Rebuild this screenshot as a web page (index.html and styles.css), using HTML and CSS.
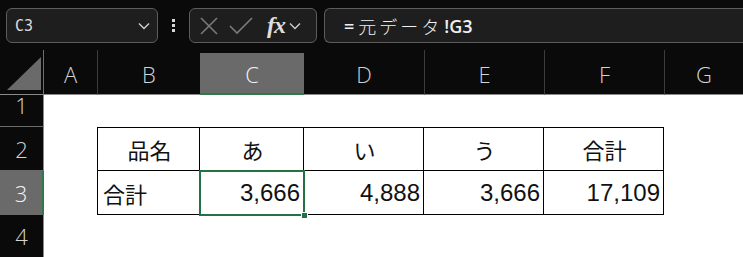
FILE: index.html
```html
<!DOCTYPE html>
<html lang="ja">
<head>
    <meta charset="UTF-8">
    <title>Sheet</title>
    <link rel="stylesheet" href="styles.css">
</head>
<body>
    <!-- Name box / formula bar -->
    <div class="toolbar">
        <div class="name-box">
            <span>C3</span>
            <svg class="chev" width="12" height="8" viewBox="0 0 12 8"><path d="M1 1.5 L6 6.5 L11 1.5" fill="none" stroke="#cfcfcf" stroke-width="1.4"/></svg>
        </div>
        <div class="kebab"><i></i><i></i><i></i></div>
        <div class="fx-box">
            <svg width="20" height="18" viewBox="0 0 20 18"><path d="M2 1 L18 17 M18 1 L2 17" stroke="#7a7a7a" stroke-width="1.6" fill="none"/></svg>
            <svg width="24" height="18" viewBox="0 0 24 18"><path d="M1 9 L8 16 L23 1" stroke="#7a7a7a" stroke-width="1.6" fill="none"/></svg>
            <span class="fx">fx</span>
            <svg width="12" height="8" viewBox="0 0 12 8"><path d="M1 1.5 L6 6.5 L11 1.5" fill="none" stroke="#cfcfcf" stroke-width="1.3"/></svg>
        </div>
        <div class="formula">
            <b>=</b><span class="jp">元データ</span><b>!G3</b>
        </div>
    </div>

    <!-- Sheet grid -->
    <div class="sheet">
        <div class="corner"><div class="tri"></div></div>
        <div class="col-hd">A</div>
        <div class="col-hd sep">B</div>
        <div class="col-hd active">C</div>
        <div class="col-hd">D</div>
        <div class="col-hd sep">E</div>
        <div class="col-hd sep">F</div>
        <div class="col-hd sep">G</div>

        <div class="row-hd first">1</div>
        <div class="cell"></div><div class="cell"></div><div class="cell"></div><div class="cell"></div><div class="cell"></div><div class="cell"></div><div class="cell"></div>

        <div class="row-hd">2</div>
        <div class="cell"></div>
        <div class="cell t top left center">品名</div>
        <div class="cell t top center">あ</div>
        <div class="cell t top center">い</div>
        <div class="cell t top center">う</div>
        <div class="cell t top center">合計</div>
        <div class="cell"></div>

        <div class="row-hd active">3</div>
        <div class="cell"></div>
        <div class="cell t left jp">合計</div>
        <div class="cell t num selected">3,666<span class="handle"></span></div>
        <div class="cell t num">4,888</div>
        <div class="cell t num">3,666</div>
        <div class="cell t num">17,109</div>
        <div class="cell"></div>

        <div class="row-hd">4</div>
        <div class="cell"></div><div class="cell"></div><div class="cell"></div><div class="cell"></div><div class="cell"></div><div class="cell"></div><div class="cell"></div>
    </div>
</body>
</html>
```

FILE: styles.css
```css
* {
    margin: 0;
    padding: 0;
    box-sizing: border-box;
}

body {
    background: #0a0a0a;
    width: 743px;
    height: 257px;
    overflow: hidden;
    font-family: "Liberation Sans", "Noto Sans CJK JP", sans-serif;
}

.toolbar {
    height: 50px;
    display: flex;
    align-items: flex-start;
    padding-top: 8px;
    padding-left: 6px;
}

.name-box,
.fx-box,
.formula {
    height: 35px;
    background: #1e1e1e;
    border: 1px solid #5c5c5c;
    border-radius: 6px;
    display: flex;
    align-items: center;
}

.name-box {
    width: 152px;
    padding: 0 7px 0 8px;
    justify-content: space-between;
    color: #dcdcdc;
    font-family: "DejaVu Sans Mono", monospace;
    font-size: 15px;
}

.kebab {
    width: 31px;
    height: 35px;
    display: flex;
    flex-direction: column;
    align-items: center;
    justify-content: center;
    gap: 2px;
}

.kebab i {
    width: 3px;
    height: 3px;
    background: #d8d8d8;
}

.fx-box {
    width: 128px;
    padding: 0 4px 0 9px;
    gap: 10px;
}

.fx-box .fx {
    color: #dedede;
    font-family: "Liberation Serif", serif;
    font-style: italic;
    font-weight: bold;
    font-size: 24px;
    margin-left: 4px;
    margin-right: -6px;
    letter-spacing: -1px;
}

.formula {
    flex: 1;
    margin-left: 7px;
    border-right: none;
    border-radius: 6px 0 0 6px;
    padding-left: 19px;
    color: #f0f0f0;
    font-size: 18px;
}

.formula b {
    font-family: "Open Sans", sans-serif;
    font-weight: 600;
}

.formula .jp {
    font-family: "Noto Sans CJK JP", sans-serif;
    font-weight: 300;
    letter-spacing: 3px;
    margin: 0 2px 0 4px;
}

.sheet {
    display: grid;
    grid-template-columns: 44px 53px 103px 104px 120px 120px 120px 79px;
    grid-template-rows: 45px 32px 44px 44px 43px;
}

.corner {
    background: #0a0a0a;
    border-right: 1px solid #6e6e6e;
    border-bottom: 1px solid #8a8a8a;
    padding: 7px 2px 4px 7px;
}

.tri {
    width: 100%;
    height: 100%;
    background: #6a6a6a;
    clip-path: polygon(100% 0, 100% 100%, 0 100%);
}

.col-hd {
    background: #0a0a0a;
    border-bottom: 1px solid #8a8a8a;
    color: #d4d4d4;
    font-family: "Open Sans", sans-serif;
    font-weight: 300;
    font-size: 22px;
    display: flex;
    align-items: center;
    justify-content: center;
    padding-top: 4px;
}

.col-hd.sep {
    border-left: 1px solid #3c3c3c;
    background-clip: padding-box;
}

.col-hd.active {
    background: #6a6a6a;
    color: #f4f4f4;
    border-bottom: 2px solid #2f7a4c;
    margin-top: 3px;
    padding-top: 2px;
}

.row-hd {
    border-right: 1px solid #8a8a8a;
    border-bottom: 1px solid #6a6a6a;
    color: #d4d4d4;
    font-family: "Open Sans", sans-serif;
    font-weight: 300;
    font-size: 22px;
    display: flex;
    align-items: center;
    justify-content: center;
}

.row-hd.first {
    align-items: flex-start;
    line-height: 20px;
}

.row-hd.active {
    background: #6a6a6a;
    color: #f4f4f4;
    border-right: 2px solid #2f7a4c;
}

.cell {
    background: #fff;
    color: #111;
    font-size: 24px;
    display: flex;
    align-items: center;
    position: relative;
}

.cell.t {
    border-right: 1px solid #000;
    border-bottom: 1px solid #000;
    padding: 0 3px 0 5px;
}

.cell.top {
    border-top: 1px solid #000;
}

.cell.left {
    border-left: 1px solid #000;
}

.cell.center,
.cell.jp {
    font-family: "Noto Sans CJK JP", sans-serif;
    font-size: 22px;
}

.cell.center {
    justify-content: center;
}

.cell.num {
    justify-content: flex-end;
}

.cell.selected {
    outline: 2px solid #217346;
    outline-offset: -1px;
    z-index: 1;
}

.handle {
    position: absolute;
    right: -5px;
    bottom: -5px;
    width: 7px;
    height: 7px;
    background: #217346;
    border: 1px solid #fff;
}
```
